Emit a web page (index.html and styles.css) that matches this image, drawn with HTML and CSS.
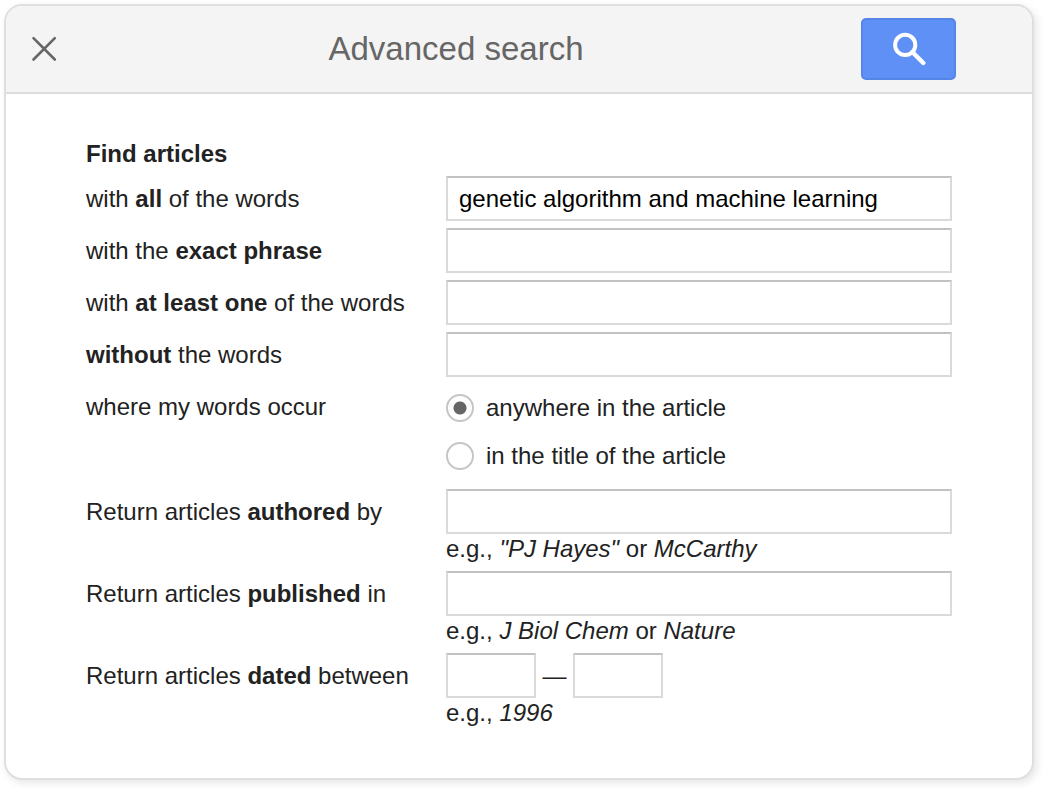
FILE: index.html
```html
<!DOCTYPE html>
<html lang="en">
<head>
<meta charset="utf-8">
<title>Advanced search</title>
<link rel="stylesheet" href="styles.css">
</head>
<body>
<form class="dialog">
  <header class="dialog-header">
    <button class="close" type="button" aria-label="Close">
      <svg width="26" height="26" viewBox="0 0 26 26" fill="none" stroke="#666" stroke-width="2.6" stroke-linecap="round"><path d="M2.5 2.2 23.8 23.5M23.8 2.2 2.5 23.5"/></svg>
    </button>
    <h1 class="title">Advanced search</h1>
    <button class="submit" type="submit" aria-label="Search">
      <svg width="34" height="34" viewBox="0 0 34 34" fill="none" stroke="#fff" stroke-width="4"><circle cx="13.2" cy="12.9" r="10.1"/><path d="M20.3 20 31.3 31" stroke-width="4.4" stroke-linecap="round"/></svg>
    </button>
  </header>
  <div class="dialog-body">
    <h2 class="section-title">Find articles</h2>
    <div class="rows">
      <label class="label" for="all">with <b>all</b> of the words</label>
      <input class="field" id="all" type="text" value="genetic algorithm and machine learning">

      <label class="label" for="phrase">with the <b>exact phrase</b></label>
      <input class="field" id="phrase" type="text">

      <label class="label" for="any">with <b>at least one</b> of the words</label>
      <input class="field" id="any" type="text">

      <label class="label" for="none"><b>without</b> the words</label>
      <input class="field" id="none" type="text">

      <div class="label" id="occur">where my words occur</div>
      <div class="choices" role="radiogroup" aria-labelledby="occur">
        <label class="choice"><input class="radio" type="radio" name="occur" checked>anywhere in the article</label>
        <label class="choice"><input class="radio" type="radio" name="occur">in the title of the article</label>
      </div>

      <label class="label" for="author">Return articles <b>authored</b> by</label>
      <div>
        <input class="field" id="author" type="text">
        <div class="hint">e.g., <i>"PJ Hayes"</i> or <i>McCarthy</i></div>
      </div>

      <label class="label" for="journal">Return articles <b>published</b> in</label>
      <div>
        <input class="field" id="journal" type="text">
        <div class="hint">e.g., <i>J Biol Chem</i> or <i>Nature</i></div>
      </div>

      <label class="label" for="from">Return articles <b>dated</b> between</label>
      <div>
        <div class="dates">
          <input class="field year" id="from" type="text">
          <span class="dash">—</span>
          <input class="field year" type="text" aria-label="End year">
        </div>
        <div class="hint">e.g., <i>1996</i></div>
      </div>
    </div>
  </div>
</form>
</body>
</html>
```
FILE: styles.css
```css
* {
  box-sizing: border-box;
}

body {
  margin: 0;
  padding: 4px 12px 12px 4px;
  background: #fff;
  color: #222;
  font: 24px/30px "Liberation Sans", Arial, sans-serif;
}

.dialog {
  border: 2px solid #dfdfdf;
  border-radius: 18px;
  background: #fff;
  box-shadow: 3px 3px 8px rgba(0, 0, 0, 0.1);
  overflow: hidden;
}

.dialog-header {
  display: flex;
  align-items: center;
  padding: 12px 76px 12px 25px;
  border-bottom: 2px solid #dcdcdc;
  background: #f4f4f4;
}

.close {
  display: flex;
  padding: 0;
  border: 0;
  background: none;
}

.title {
  flex: 1;
  margin: 0 6px 0 0;
  color: #666;
  font-size: 33px;
  font-weight: normal;
  line-height: 40px;
  text-align: center;
}

.submit {
  display: flex;
  align-items: center;
  justify-content: center;
  width: 95px;
  height: 62px;
  padding: 0;
  border: 2px solid #5585e6;
  border-radius: 5px;
  background: #5e90f6;
}

.dialog-body {
  padding: 37px 80px 50px;
}

.section-title {
  margin: 0;
  font-size: 24px;
  line-height: 45px;
}

.rows {
  display: grid;
  grid-template-columns: 360px 1fr;
  row-gap: 7px;
}

.label {
  line-height: 45px;
}

.field {
  display: block;
  width: 100%;
  height: 45px;
  padding: 0 11px;
  border: 2px solid #dadada;
  border-top-color: #c2c2c2;
  background: #fff;
  color: #000;
  font: inherit;
}

.choices {
  padding-bottom: 2px;
}

.choice {
  display: flex;
  align-items: center;
  gap: 12px;
  height: 48px;
}

.radio {
  appearance: none;
  flex: none;
  width: 28px;
  height: 28px;
  margin: 0;
  border: 2px solid #c6c6c6;
  border-radius: 50%;
  background: #fff;
}

.radio:checked {
  background: radial-gradient(circle, #666 6px, #fff 7px);
}

.dates {
  display: flex;
  align-items: center;
}

.year {
  width: 90px;
}

.dash {
  width: 37px;
  text-align: center;
}
```
